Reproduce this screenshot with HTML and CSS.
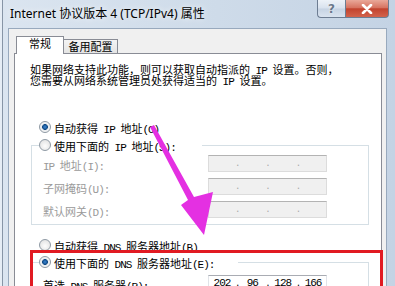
FILE: index.html
```html
<!DOCTYPE html>
<html lang="zh-CN">
<head>
    <meta charset="UTF-8">
    <link rel="stylesheet" href="styles.css">
    <title>Internet 协议版本 4 (TCP/IPv4) 属性</title>
</head>
<body>
<div class="window">
    <div class="titlebar">
        <span class="title">Internet 协议版本 4 (TCP/IPv4) 属性</span>
        <div class="caption_btns">
            <div class="cbtn cbtn_help">?</div>
            <div class="cbtn cbtn_close">
                <svg width="12" height="10" viewBox="0 0 12 10">
                    <path d="M2 1 L10 9 M10 1 L2 9" stroke="#fff" stroke-width="2.6" stroke-linecap="round"/>
                </svg>
            </div>
        </div>
    </div>

    <div class="client">
        <div class="tabs">
            <div class="tab tab_active">常规</div>
            <div class="tab">备用配置</div>
        </div>

        <div class="panel">
            <p class="intro">如果网络支持此功能，则可以获取自动指派的<span class="en"> IP </span>设置。否则，<br>您需要从网络系统管理员处获得适当的<span class="en"> IP </span>设置。</p>

            <div class="radio radio_on radio_top">
                <span class="radio_box"></span>
                <span class="radio_text">自动获得<span class="en"> IP </span>地址<span class="en">(O)</span></span>
            </div>

            <fieldset class="group group_ip">
                <legend class="group_title legend_ip">
                    <div class="radio">
                        <span class="radio_box"></span>
                        <span class="radio_text">使用下面的<span class="en"> IP </span>地址<span class="en">(S):</span></span>
                    </div>
                </legend>
                <div class="field field_first">
                    <span class="field_label"><span class="en">IP </span>地址<span class="en">(I):</span></span>
                    <div class="ipbox"><span class="ip_part"></span><span class="ip_dot">.</span><span class="ip_part"></span><span class="ip_dot">.</span><span class="ip_part"></span><span class="ip_dot">.</span><span class="ip_part"></span></div>
                </div>
                <div class="field">
                    <span class="field_label">子网掩码<span class="en">(U):</span></span>
                    <div class="ipbox"><span class="ip_part"></span><span class="ip_dot">.</span><span class="ip_part"></span><span class="ip_dot">.</span><span class="ip_part"></span><span class="ip_dot">.</span><span class="ip_part"></span></div>
                </div>
                <div class="field">
                    <span class="field_label">默认网关<span class="en">(D):</span></span>
                    <div class="ipbox"><span class="ip_part"></span><span class="ip_dot">.</span><span class="ip_part"></span><span class="ip_dot">.</span><span class="ip_part"></span><span class="ip_dot">.</span><span class="ip_part"></span></div>
                </div>
            </fieldset>

            <div class="radio radio_dns">
                <span class="radio_box"></span>
                <span class="radio_text">自动获得<span class="en"> DNS </span>服务器地址<span class="en">(B)</span></span>
            </div>

            <fieldset class="group group_dns">
                <legend class="group_title legend_dns">
                    <div class="radio radio_on">
                        <span class="radio_box"></span>
                        <span class="radio_text">使用下面的<span class="en"> DNS </span>服务器地址<span class="en">(E):</span></span>
                    </div>
                </legend>
                <div class="field field_dns">
                    <span class="field_label field_label_on">首选<span class="en"> DNS </span>服务器<span class="en">(P):</span></span>
                    <div class="ipbox ipbox_on"><span class="ip_part">202</span><span class="ip_dot">.</span><span class="ip_part">96</span><span class="ip_dot">.</span><span class="ip_part">128</span><span class="ip_dot">.</span><span class="ip_part">166</span></div>
                </div>
                <div class="field">
                    <span class="field_label field_label_on">备用<span class="en"> DNS </span>服务器<span class="en">(A):</span></span>
                    <div class="ipbox ipbox_on"><span class="ip_part"></span><span class="ip_dot">.</span><span class="ip_part"></span><span class="ip_dot">.</span><span class="ip_part"></span><span class="ip_dot">.</span><span class="ip_part"></span></div>
                </div>
            </fieldset>
        </div>
    </div>

    <!-- пометки поверх скриншота -->
    <div class="mark"></div>
    <svg class="arrow" width="395" height="286" viewBox="0 0 395 286">
        <polygon points="150,127 154,125 194,197 213,192 204,235 181,205 188,200" fill="#e430e2"/>
    </svg>
</div>
</body>
</html>
```

FILE: styles.css
```css
body {
    margin: 0;
    font-family: "Liberation Mono", "Noto Sans CJK SC", monospace;
    font-size: 11px;
    color: #000;
}

/* латиница в тексте — полуширинная, как в SimSun */
.en {
    letter-spacing: -1px;
}

/* Окно */

.window {
    width: 395px;
    height: 286px;
    overflow: hidden;
    position: relative;
    display: flex;
    flex-direction: column;
    background:
        linear-gradient(to right, #e6edf5 0 2px, #8795a6 2px 3px, transparent 3px),
        linear-gradient(to right, #dbe5f0, #cedbe9 55%, #c4d3e4);
}

.titlebar {
    height: 28px;
    flex-shrink: 0;
    display: flex;
    align-items: flex-start;
}
.title {
    flex: 1;
    margin: 6px 0 0 10px;
    font-family: "Noto Sans", "Noto Sans CJK SC", sans-serif;
    font-size: 12px;
    line-height: 16px;
    white-space: nowrap;
    text-shadow: 0 0 6px #fff;
}
.caption_btns {
    display: flex;
    margin-right: 6px;
}
.cbtn {
    height: 18px;
    box-sizing: border-box;
    border: 1px solid #6d7d92;
    border-top: none;
    display: flex;
    align-items: center;
    justify-content: center;
}
.cbtn_help {
    width: 28px;
    border-right: none;
    border-radius: 0 0 0 4px;
    background: linear-gradient(#edf2f8, #d8e2ee 48%, #c6d3e3 52%, #d9e3ef);
    color: #6a788b;
    font: bold 12px "DejaVu Sans", sans-serif;
    text-shadow: 0 0 2px #fff;
}
.cbtn_close {
    width: 44px;
    border-radius: 0 0 4px 0;
    background: linear-gradient(#e9a899, #d77461 45%, #c2432e 52%, #d3634c);
}

/* Клиентская область и вкладки */

.client {
    flex: 1;
    margin: 0 8px;
    padding: 7px 4px 0 5px;
    background: #f0f0f0;
    border: 1px solid #98a9bd;
    border-bottom: none;
    display: flex;
    flex-direction: column;
}
.tabs {
    height: 17px;
    padding-left: 2px;
    display: flex;
    align-items: flex-end;
}
.tab {
    box-sizing: border-box;
    height: 14px;
    width: 55px;
    margin-left: -1px;
    padding-top: 2px;
    border: 1px solid #898c95;
    border-bottom: none;
    background: linear-gradient(#f4f4f4, #e4e4e4);
    text-align: center;
    line-height: 13px;
    white-space: nowrap;
}
.tab_active {
    position: relative;
    z-index: 1;
    height: 18px;
    width: 48px;
    margin-left: 0;
    margin-bottom: -1px;
    padding-top: 0;
    background: #fff;
    line-height: 16px;
}

.panel {
    flex: 1;
    background: #fff;
    border: 1px solid #898c95;
    border-bottom: none;
}

.intro {
    margin: 12px 0 0 15px;
    line-height: 11px;
    white-space: nowrap;
}

/* Переключатели */

.radio {
    height: 16px;
    display: flex;
    align-items: center;
    gap: 3px;
}
.radio_text {
    white-space: pre;
    padding-top: 1px;
}
.radio_top {
    margin-top: 31px;
    padding-left: 24px;
}
.radio_dns {
    margin-top: 12px;
    padding-left: 24px;
}
.radio_box {
    width: 12px;
    height: 12px;
    box-sizing: border-box;
    border-radius: 50%;
    border: 1px solid #8e99a4;
    background: radial-gradient(circle at 50% 60%, #fdfdfd, #e6e6e6 70%, #cfd3d6);
    flex-shrink: 0;
}
.radio_on .radio_box {
    background: radial-gradient(circle, #3b86d4 0, #124b86 2.6px, #e8ebee 3.2px, #f6f6f6 5px, #d8dcdf);
}

/* Группы */

.group {
    margin: 2px 12px 0 16px;
    padding: 0 0 6px 7px;
    border: 1px solid #d5dfe5;
    min-width: 0;
}
.group_dns {
    margin-top: 1px;
}
.group_title {
    padding: 0;
    margin: 0;
    background: #fff;
}
.legend_ip {
    width: 163px;
}
.legend_dns {
    width: 199px;
}

.field {
    height: 17px;
    margin-top: 6px;
    padding-left: 4px;
    display: flex;
    align-items: center;
}
.field_first {
    margin-top: 2px;
}
.field_dns {
    margin-top: 5px;
}
.field_label {
    width: 165px;
    flex-shrink: 0;
    color: #9a9a9a;
    white-space: pre;
    padding-top: 2px;
}
.field_label_on {
    color: #000;
}

.ipbox {
    width: 119px;
    height: 17px;
    box-sizing: border-box;
    border: 1px solid #dcdcdc;
    border-top-color: #b3b3b3;
    background: #f0f0f0;
    display: flex;
    color: #a8a8a8;
    letter-spacing: -1px;
}
.ipbox_on {
    background: #fff;
    border-color: #e0e3e8;
    border-top-color: #a9acb3;
    color: #000;
}
.ip_part {
    flex: 1;
    text-align: center;
    line-height: 15px;
}
.ip_dot {
    flex: 0 0 4px;
    text-align: center;
    line-height: 17px;
    font-size: 9px;
}

/* Пометки */

.mark {
    position: absolute;
    left: 30px;
    top: 250px;
    width: 353px;
    height: 60px;
    box-sizing: border-box;
    border: 3px solid #e11a22;
}
.arrow {
    position: absolute;
    left: 0;
    top: 0;
    pointer-events: none;
}
```
